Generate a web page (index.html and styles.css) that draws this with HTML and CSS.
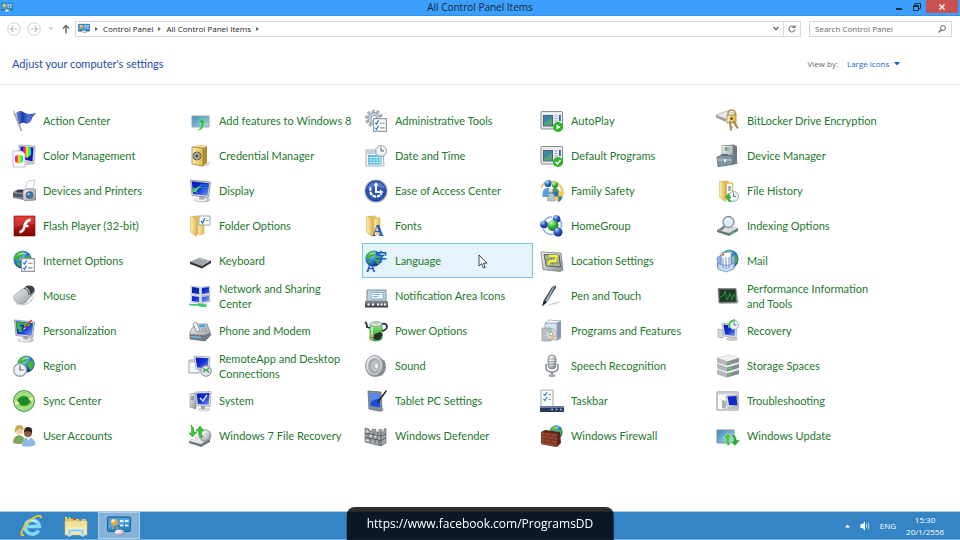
FILE: index.html
```html
<!DOCTYPE html>
<html lang="en">
<head>
    <meta charset="UTF-8">
    <meta name="viewport" content="width=device-width, initial-scale=1.0">
    <title>All Control Panel Items</title>
    <link rel="stylesheet" href="styles.css">
</head>
<body>

    <!-- Shared gradients and icon parts -->
    <svg class="defs" width="0" height="0" aria-hidden="true">
        <defs>
            <linearGradient id="blue" x1="0" y1="0" x2="1" y2="1"><stop offset="0" stop-color="#0a1aa8"/><stop offset=".5" stop-color="#1230d8"/><stop offset="1" stop-color="#7fa6f4"/></linearGradient>
            <linearGradient id="gray" x1="0" y1="0" x2="1" y2="1"><stop offset="0" stop-color="#f6f7f8"/><stop offset="1" stop-color="#8b9096"/></linearGradient>
            <linearGradient id="dark" x1="0" y1="0" x2="0" y2="1"><stop offset="0" stop-color="#8a8f96"/><stop offset="1" stop-color="#33373d"/></linearGradient>
            <linearGradient id="gold" x1="0" y1="0" x2="1" y2="0"><stop offset="0" stop-color="#fbeeb4"/><stop offset="1" stop-color="#dfb94c"/></linearGradient>
            <linearGradient id="green" x1="0" y1="0" x2="0" y2="1"><stop offset="0" stop-color="#8be87a"/><stop offset="1" stop-color="#1f9a2c"/></linearGradient>
            <linearGradient id="red" x1="0" y1="0" x2="0" y2="1"><stop offset="0" stop-color="#e8231c"/><stop offset="1" stop-color="#7c0606"/></linearGradient>
            <linearGradient id="sky" x1="0" y1="0" x2="1" y2="1"><stop offset="0" stop-color="#3f88bd"/><stop offset="1" stop-color="#a5d8ee"/></linearGradient>
            <linearGradient id="rainbow" x1="0" y1="0" x2="1" y2="0"><stop offset="0" stop-color="#f0f"/><stop offset=".25" stop-color="#f33"/><stop offset=".5" stop-color="#fe2"/><stop offset=".75" stop-color="#3e4"/><stop offset="1" stop-color="#0df"/></linearGradient>
            <linearGradient id="flag" x1="0" y1="0" x2="1" y2="0"><stop offset="0" stop-color="#6f8ce0"/><stop offset=".35" stop-color="#1c3a9e"/><stop offset=".6" stop-color="#5478dc"/><stop offset="1" stop-color="#2747b4"/></linearGradient>
            <radialGradient id="ball" cx=".35" cy=".25" r=".8"><stop offset="0" stop-color="#c4dcff"/><stop offset=".4" stop-color="#3567d4"/><stop offset="1" stop-color="#0b1f7a"/></radialGradient>
            <radialGradient id="sea" cx=".35" cy=".25" r=".8"><stop offset="0" stop-color="#b9e6ff"/><stop offset=".45" stop-color="#2f86dc"/><stop offset="1" stop-color="#0a2a86"/></radialGradient>
            <radialGradient id="leaf" cx=".35" cy=".25" r=".8"><stop offset="0" stop-color="#d0ffc0"/><stop offset=".5" stop-color="#35b53a"/><stop offset="1" stop-color="#0e6d1b"/></radialGradient>
            <radialGradient id="silver" cx=".35" cy=".3" r=".8"><stop offset="0" stop-color="#fff"/><stop offset=".6" stop-color="#c3c7cc"/><stop offset="1" stop-color="#777c83"/></radialGradient>
        </defs>

        <symbol id="globe" viewBox="0 0 16 16">
            <circle cx="8" cy="8" r="7.6" fill="url(#sea)"/>
            <path d="M3 3q3-2.500 6-2l-1 2 1.500 1-2 2-2 .5-1 2.500-2.500-1-1.500-1q.5-2.500 2.500-4zM10 6l4-1.500q1.500 3 .8 5.500L12 14l-1.500-3-1.500-1.500zM3 10l3 1 .5 3.500q-3-1-3.500-4.500z" fill="#42b43a"/>
            <path d="M3 5q4-5 9-1.500Q8 3 3 5z" fill="#fff" opacity=".5"/>
        </symbol>
        <symbol id="monitor" viewBox="0 0 24 24">
            <ellipse cx="14" cy="21" rx="8" ry="2.500" fill="#b9bcc1"/>
            <ellipse cx="13" cy="20.500" rx="6" ry="2" fill="#eceef0"/>
            <path d="M11 16h5l.5 4.500h-5z" fill="#a4a8ad"/>
            <path d="M2.500 1l20 2-2 15.500L4 16.500z" fill="#d3d6da" stroke="#7c828a" stroke-width=".7"/>
            <path d="M3.800 2.300l17.400 1.900-1.700 12.600L5 15z" fill="url(#blue)"/>
        </symbol>
        <symbol id="clock" viewBox="0 0 12 12">
            <circle cx="6" cy="6" r="5.500" fill="#eef3f7" stroke="#98a2ab" stroke-width="1"/>
            <path d="M6 2.500V6h3" fill="none" stroke="#55616c" stroke-width="1"/>
            <path d="M6 1.200v1M6 9.800v1M1.200 6h1" stroke="#8c969f" stroke-width=".7"/>
        </symbol>
        <symbol id="list" viewBox="0 0 12 12">
            <path d="M.5.5h11v11H.5z" fill="#fdfdfe" stroke="#969ba1"/>
            <path d="M2 4l1 1.200L4.800 2M2 8.500l1 1.200L4.800 6.500" fill="none" stroke="#2d7fd0" stroke-width="1.100"/>
            <path d="M6 4.500h4M6 8.500h4" stroke="#8b9197"/>
        </symbol>
        <symbol id="folder" viewBox="0 0 18 22">
            <path d="M3 1l7-.5 1 2h3v14L6 21z" fill="#e2bd5d"/>
            <path d="M9 3h6v16l-6 1z" fill="url(#gold)" stroke="#cda94c" stroke-width=".5"/>
            <path d="M1.500 1l6 2.500v18l-6-4z" fill="url(#gold)" stroke="#cda94c" stroke-width=".5"/>
        </symbol>
        <symbol id="panel" viewBox="0 0 24 20">
            <rect x=".5" y="1" width="23" height="14.500" rx="1" fill="#2c83c2" stroke="#1b6299"/>
            <path d="M1.500 2h21v5q-10 1-21 6z" fill="#6db9e8" opacity=".6"/>
            <circle cx="7.500" cy="6.500" r="3.200" fill="#f5a12c"/>
            <path d="M7.500 6.500V3a3.500 3.500 0 0 0-3.500 3.500z" fill="#fff2bf"/>
            <path d="M13 5h3.500M18 5h3.500M13 9.500h3.500M18 9.500h3.500" stroke="#d9f1ff" stroke-width="2.200"/>
            <path d="M5 12h2M9 12h2" stroke="#f5a12c" stroke-width="1.500"/>
            <ellipse cx="12.500" cy="16.500" rx="4.800" ry="3" fill="url(#silver)"/>
        </symbol>
        <symbol id="window" viewBox="0 0 24 24">
            <rect x="1" y="2.500" width="21.500" height="17.500" rx="1" fill="#e9ecef" stroke="#868c93"/>
            <path d="M3 6h10v11.500H3z" fill="#4a5f78"/>
            <path d="M4 7h8v9.500H4z" fill="#3f84a6"/>
            <path d="M4 14l8-5v7.500H4z" fill="#54a078"/>
            <path d="M14.500 7h3M14.500 9.500h3M14.500 12h3" stroke="#9fa6ae"/>
            <path d="M19 6h1.800v6H19z" fill="#2c64ac"/>
        </symbol>
        <symbol id="server" viewBox="0 0 24 12">
            <path d="M1 4l12-3.500 10 3.500v4l-12 3.500-10-3.500z" fill="#858b92"/>
            <path d="M1 4l12-3.500L23 4 11 7.500z" fill="#eceef0"/>
            <path d="M1 4l10 3.500v4L1 8z" fill="#b4b9bf"/>
            <path d="M12.500 9l3-1" stroke="#5bd94a" stroke-width="1.600"/>
        </symbol>
    </svg>

    <header class="titlebar">
        <svg class="titlebar-icon" viewBox="0 0 24 20" aria-hidden="true"><use href="#panel"/></svg>
        <h1 class="titlebar-text">All Control Panel Items</h1>
        <div class="window-buttons">
            <button class="window-button" aria-label="Minimize"><svg width="8" height="8" viewBox="0 0 8 8"><path d="M1 6h6" stroke="#1b2b3a" stroke-width="2"/></svg></button>
            <button class="window-button" aria-label="Restore"><svg width="8" height="8" viewBox="0 0 8 8"><path d="M2 2V.5h5.500v5H6" fill="none" stroke="#1b2b3a"/><path d="M.5 2.500h5v5h-5zM.5 3.500h5" fill="none" stroke="#1b2b3a"/></svg></button>
            <button class="window-button close" aria-label="Close"><svg width="6" height="6" viewBox="0 0 6 6"><path d="M.5.5l5 5M5.500.5l-5 5" stroke="#fff" stroke-width="1.400"/></svg></button>
        </div>
    </header>

    <!-- Navigation bar -->
    <nav class="toolbar">
        <button class="nav-button" aria-label="Back"><svg width="14" height="14" viewBox="0 0 14 14"><circle cx="7" cy="7" r="6.200" fill="none" stroke="#cfcfcf"/><path d="M10.500 7h-7M6.500 4l-3 3 3 3" fill="none" stroke="#c4c4c4" stroke-width="1.200"/></svg></button>
        <button class="nav-button" aria-label="Forward"><svg width="14" height="14" viewBox="0 0 14 14"><circle cx="7" cy="7" r="6.200" fill="none" stroke="#cfcfcf"/><path d="M3.500 7h7M7.500 4l3 3-3 3" fill="none" stroke="#c4c4c4" stroke-width="1.200"/></svg></button>
        <button class="nav-button small" aria-label="Recent locations"><svg width="6" height="4" viewBox="0 0 6 4"><path d="M.5.5h5L3 3z" fill="#ccc"/></svg></button>
        <button class="nav-button up" aria-label="Up"><svg width="8" height="10" viewBox="0 0 8 10"><path d="M4 9.500V1.500M1 4.500l3-3 3 3" fill="none" stroke="#666" stroke-width="1.400"/></svg></button>
        <div class="address">
            <svg class="address-icon" viewBox="0 0 24 20" aria-hidden="true"><use href="#panel"/></svg>
            <span class="crumb-arrow"></span>
            <a class="crumb" href="#">Control Panel</a>
            <span class="crumb-arrow"></span>
            <a class="crumb" href="#">All Control Panel Items</a>
            <span class="crumb-arrow"></span>
            <button class="address-button drop" aria-label="Previous locations"><svg width="6" height="5" viewBox="0 0 6 5"><path d="M.5 1L3 3.800 5.500 1" fill="none" stroke="#666" stroke-width="1.400"/></svg></button>
            <button class="address-button refresh" aria-label="Refresh"><svg width="8" height="8" viewBox="0 0 8 8"><path d="M6.500 2.200A3 3 0 1 0 7 4.500M4.200 2.500H7V0" fill="none" stroke="#777" stroke-width="1.100"/></svg></button>
        </div>
        <div class="search">
            <input class="search-input" type="search" placeholder="Search Control Panel" aria-label="Search Control Panel">
            <svg width="8" height="8" viewBox="0 0 8 8" aria-hidden="true"><circle cx="5" cy="3" r="2.400" fill="none" stroke="#666"/><path d="M3.200 4.800L.6 7.400" stroke="#666" stroke-width="1.400"/></svg>
        </div>
    </nav>

    <div class="heading">
        <h2 class="heading-text">Adjust your computer's settings</h2>
        <div class="view">
            <label for="view">View by:</label>
            <select class="view-select" id="view">
                <option>Large icons</option>
            </select>
            <svg width="6" height="4" viewBox="0 0 6 4" aria-hidden="true"><path d="M0 0h6L3 3.500z" fill="#0d67c8"/></svg>
        </div>
    </div>

    <main class="items">
        <a class="item" href="#">
            <svg class="icon" viewBox="0 0 24 24"><path d="M2 3l7.500 19" stroke="#a0a5ad" stroke-width="1.800"/><circle cx="2" cy="2.800" r="1.200" fill="#cdd1d6"/><path d="M4 4q4-3.500 8-.5 4 2.500 12 .5-4 3.500-5 8-3 4-6.500 2-3-1-5 1.500z" fill="url(#flag)"/></svg>
            Action Center
        </a>
        <a class="item" href="#">
            <svg class="icon" viewBox="0 0 24 24"><path d="M4 7h17v11H4z" fill="url(#sky)" stroke="#9ba5ad"/><path d="M7 22q6-.5 6-8H9.500L14 9l4.500 5h-2.500q0 8-9 8z" fill="#35bd4a" stroke="#eafbe4" stroke-width=".4"/></svg>
            Add features to Windows 8
        </a>
        <a class="item" href="#">
            <svg class="icon" viewBox="0 0 24 24"><circle cx="10" cy="9.500" r="7.500" fill="none" stroke="#a3b0bf" stroke-width="3" stroke-dasharray="3 1.700"/><circle cx="10" cy="9.500" r="6" fill="#c6d0db" stroke="#8b9bad"/><circle cx="10" cy="9.500" r="3" fill="#fff" stroke="#8b9bad"/><use href="#list" x="9" y="9" width="14" height="14"/></svg>
            Administrative Tools
        </a>
        <a class="item" href="#">
            <svg class="icon" viewBox="0 0 24 24"><use href="#window"/><circle cx="18" cy="18" r="5" fill="#2fb42c"/><path d="M16.500 15.500v5l4-2.500z" fill="#fff"/></svg>
            AutoPlay
        </a>
        <a class="item" href="#">
            <svg class="icon" viewBox="0 0 24 24"><path d="M0 6l11-4 10 3-11 5z" fill="#e9ebed" stroke="#989da3" stroke-width=".6"/><path d="M0 6l10 4v3L0 8.500z" fill="#9ca1a7"/><path d="M12 6V4q0-3 3.500-3T19 4v3" fill="none" stroke="#b59b4f" stroke-width="1.600"/><path d="M11 6h9v8h-9z" fill="url(#gold)" stroke="#9b7a20" stroke-width=".7"/><circle cx="15.500" cy="9.500" r="1.500" fill="#6e5514"/><path d="M14 12l1 9.500M17 12l5 7.500" stroke="#a18a48" stroke-width="2"/><path d="M15 18h2M19 17l2-1.500" stroke="#a18a48" stroke-width="1.200"/></svg>
            BitLocker Drive Encryption
        </a>

        <a class="item" href="#">
            <svg class="icon" viewBox="0 0 24 24"><path d="M16 17l5 4h-9z" fill="#c7cace"/><path d="M7 1l16 1-1 18-8-3-7-3z" fill="#d9dce0" stroke="#8d9299" stroke-width=".6"/><path d="M8.500 2.500l13 1-1 14-12-3z" fill="#101cb4"/><path d="M11 4l4-1.500L19 4v7l-4 3-4-3z" fill="url(#rainbow)"/><path d="M1 7h9l3 3v13H1z" fill="#fff" stroke="#a3a7ac" stroke-width=".7"/><path d="M3 12l4-1.500L11 12v5.500L7 20l-4-2.500z" fill="url(#rainbow)"/></svg>
            Color Management
        </a>
        <a class="item" href="#">
            <svg class="icon" viewBox="0 0 24 24"><path d="M16 20l7-3-3 5-8 1z" fill="#dcdcdc"/><path d="M4 3l6-2 9 1v17l-4 3L4 20z" fill="#b48a35"/><path d="M4 3l6-2 9 1-4 2z" fill="#f3dda0"/><path d="M4 3l11 1v18L4 20z" fill="url(#gold)" stroke="#a27a26" stroke-width=".7"/><circle cx="9" cy="12" r="4" fill="#8b8980" stroke="#5f5d57"/><path d="M9 8v8M5 12h8M6.500 9.500l5 5M11.500 9.500l-5 5" stroke="#e6e3d8" stroke-width=".7"/><circle cx="9" cy="12" r="1.600" fill="#555"/></svg>
            Credential Manager
        </a>
        <a class="item" href="#">
            <svg class="icon" viewBox="0 0 24 24"><path d="M2 6h17l1 16H2z" fill="#f5f8fa" stroke="#a6afb8"/><path d="M2.500 6.500h16v3.500h-16z" fill="#c3ced8"/><path d="M4 11h13.500v9.500H4z" fill="#3fb0d8"/><path d="M4 13.500h13.500M4 16h13.500M4 18.500h13.500M7 11v9.500M10 11v9.500M13 11v9.500M16 11v9.500" stroke="#e4f6fc" stroke-width=".7"/><use href="#clock" x="11" y="1" width="12" height="12"/></svg>
            Date and Time
        </a>
        <a class="item" href="#">
            <svg class="icon" viewBox="0 0 24 24"><use href="#window"/><circle cx="18" cy="18" r="5" fill="#2fb42c"/><path d="M15.500 18l2 2 3-4" fill="none" stroke="#fff" stroke-width="1.400"/></svg>
            Default Programs
        </a>
        <a class="item" href="#">
            <svg class="icon" viewBox="0 0 24 24"><path d="M16 21l7-1-3-3z" fill="#c6c8ca"/><path d="M7 1.500l11-1 3 2v17l-5 1-9-2z" fill="#71777e"/><path d="M6 1.500h11v17H6z" fill="url(#gray)" stroke="#83888f" stroke-width=".6"/><path d="M8.500 3h5v4h-5z" fill="#a9afb5"/><circle cx="10" cy="5" r="1.200" fill="#3cbf34"/><path d="M5 12.500q0-2 2-2h3q2 0 2 2" fill="none" stroke="#4f5b66" stroke-width="1.200"/><path d="M1 13l4-1.500h11l1 9-15 2z" fill="#8497a4" stroke="#4c5b66" stroke-width=".7"/><path d="M1 16h15.500" stroke="#bccad3"/><path d="M8 15h2v3H8z" fill="#e7ecef"/></svg>
            Device Manager
        </a>

        <a class="item" href="#">
            <svg class="icon" viewBox="0 0 24 24"><path d="M13 9l3-7 7-1-2 9z" fill="#fff" stroke="#b5bac0" stroke-width=".7"/><path d="M1 13l5-3 12 1v7l-7 3-10-2z" fill="#8f959c"/><path d="M3 13l4-2h8l-2 3z" fill="#353a40"/><path d="M1 14l11 1.500v3.500L1 17.500z" fill="#50565e"/><path d="M11 12l3-2h9.500v11L13 22l-2-2z" fill="url(#gray)" stroke="#757b82" stroke-width=".6"/><circle cx="17.500" cy="16" r="3.800" fill="#56646f"/><circle cx="17.500" cy="16" r="2.600" fill="#2a7fc2"/><circle cx="16.500" cy="15" r="1" fill="#c4e9ff"/></svg>
            Devices and Printers
        </a>
        <a class="item" href="#">
            <svg class="icon" viewBox="0 0 24 24"><use href="#monitor"/><path d="M12 6h7M11 8.500h7.500M13 11h5" stroke="#2b80ee" stroke-width="1"/><path d="M5 13l.5-5 1.500 1.500 7-3.500-5.500 6 1.500 1.500z" fill="#49d85b"/></svg>
            Display
        </a>
        <a class="item" href="#">
            <svg class="icon" viewBox="0 0 24 24"><circle cx="12" cy="12" r="11" fill="#19388f" stroke="#9aa7bd" stroke-width="1.200"/><circle cx="12" cy="12" r="9.500" fill="#2c52b4"/><path d="M3 10q2-7 9-7.500 7 .5 9 7.500-9-4-18 0z" fill="#7f9ee0" opacity=".5"/><path d="M7 8.500a6 6 0 1 0 10.500 6" fill="none" stroke="#fff" stroke-width="2.200" stroke-dasharray="3.500 .8"/><path d="M12 5v8h5" fill="none" stroke="#fff" stroke-width="2"/><path d="M9.500 6.500L12 3.500l2.500 3zM16 10.500l3.500 2.500-3.500 2.500z" fill="#fff"/></svg>
            Ease of Access Center
        </a>
        <a class="item" href="#">
            <svg class="icon" viewBox="0 0 24 24"><path d="M1 9q3-8 14-6 8 3 8 13" fill="none" stroke="#f4c06c" stroke-width="2"/><circle cx="8" cy="4.500" r="3.500" fill="url(#sea)"/><path d="M2.500 18q-1-9 5-9t5.500 9z" fill="#5aa3d8"/><circle cx="15" cy="6" r="3" fill="url(#leaf)"/><path d="M11 16q-.5-7 4-7t4.500 7z" fill="#4d9a48"/><circle cx="11" cy="11.500" r="2.300" fill="url(#silver)"/><path d="M7.500 22q0-8 3.500-8t4 8z" fill="#b6c3cf" stroke="#7f8c99" stroke-width=".5"/><path d="M14 13q3 0 4.500-1.500Q20 13 23 13q0 8-4.500 10Q14 21 14 13z" fill="#2d6fc8"/><path d="M18.500 11.500Q20 13 23 13v4.500h-4.500zM14.300 17.500h4.200V23q-3.700-1.500-4.200-5.500z" fill="#f6cf3a"/></svg>
            Family Safety
        </a>
        <a class="item" href="#">
            <svg class="icon" viewBox="0 0 24 24"><use href="#folder" x="2" y="1" width="18" height="22"/><path d="M11 5h5v12h-5z" fill="#fbfbf4"/><path d="M12 7h3v5h-3z" fill="#8fb6d8"/><use href="#clock" x="12" y="12" width="11" height="11"/><path d="M15 23q-4 0-4-4H8.500l4-5 3 5h-2q0 2.500 2 3z" fill="#31b23c"/></svg>
            File History
        </a>

        <a class="item" href="#">
            <svg class="icon" viewBox="0 0 24 24"><path d="M2 2h21v20H2z" fill="url(#red)" stroke="#6b0707" stroke-width=".6"/><path d="M2.500 2.500h20v8q-10-1-20 4z" fill="#fff" opacity=".12"/><path d="M18.500 6q-4.500 0-6 6.500-1.500 5.500-5 5.500" fill="none" stroke="#fff" stroke-width="2.800"/><path d="M12 12h4.500" stroke="#fff" stroke-width="2.400"/></svg>
            Flash Player (32-bit)
        </a>
        <a class="item" href="#">
            <svg class="icon" viewBox="0 0 24 24"><use href="#folder" x="1" y="1" width="18" height="22"/><path d="M11 2h11v9H11z" fill="#fff" stroke="#9aa0a7"/><path d="M13 7l1.500 2L17 4" fill="none" stroke="#2d7fd0" stroke-width="1.500"/><path d="M18 6.500h3" stroke="#9aa0a7"/></svg>
            Folder Options
        </a>
        <a class="item" href="#">
            <svg class="icon" viewBox="0 0 24 24"><use href="#folder" x="1" y="1" width="18" height="22"/><text x="8" y="22" font-family="Liberation Serif, serif" font-weight="bold" font-size="16" fill="#2459c4">A</text></svg>
            Fonts
        </a>
        <a class="item" href="#">
            <svg class="icon" viewBox="0 0 24 24"><path d="M14 2a9 9 0 0 1 7 12M3 15a9 9 0 0 0 11 5M4 8q2-5 8-5" fill="none" stroke="#8ca9df" stroke-width="1.500"/><circle cx="16.500" cy="5" r="3.800" fill="url(#ball)"/><circle cx="4" cy="10.500" r="3.800" fill="url(#ball)"/><circle cx="13" cy="11.500" r="5.500" fill="url(#leaf)"/><circle cx="18" cy="18" r="4.500" fill="url(#ball)"/></svg>
            HomeGroup
        </a>
        <a class="item" href="#">
            <svg class="icon" viewBox="0 0 24 24"><path d="M1 16l7-4 14 2v3l-9 5-12-4z" fill="#6e747b"/><path d="M1 16l7-4 14 2-9 5z" fill="#dadde1"/><path d="M14 20l4-2" stroke="#49c746" stroke-width="1.500"/><path d="M9 12L3 17" stroke="#7c838b" stroke-width="2.400"/><circle cx="12.500" cy="8" r="5.500" fill="#d9ebfa" stroke="#848c94" stroke-width="1.300"/><path d="M9 7q2-4 6-2-3 0-6 2z" fill="#fff"/></svg>
            Indexing Options
        </a>

        <a class="item" href="#">
            <svg class="icon" viewBox="0 0 24 24"><use href="#globe" x="1" y="1" width="19" height="19"/><use href="#list" x="9" y="9" width="14" height="14"/></svg>
            Internet Options
        </a>
        <a class="item" href="#">
            <svg class="icon" viewBox="0 0 24 24"><path d="M2 12.500l9-4 12 3-9 6z" fill="#c2c5c9"/><path d="M2 12.500l12 4.500v2.500L2 15zM14 17l9-5.500v2.500l-9 5.500z" fill="#34383e"/><path d="M4 12.500l11 3.500M6.500 11.500l11 3M9 10.500l10 2.600M5 13.500l8-4.500M8.500 14.500l8-4.500M12 15.500l7.500-4.500" stroke="#7b8087" stroke-width=".6"/></svg>
            Keyboard
        </a>
        <a class="item selected" href="#">
            <svg class="icon" viewBox="0 0 24 24"><use href="#globe" x="1" y="1" width="17" height="17"/><text x="11" y="13" font-family="Noto Sans CJK JP, sans-serif" font-weight="bold" font-size="12" fill="#1c5bc0">字</text><text x="2" y="23" font-family="Liberation Sans, sans-serif" font-weight="bold" font-size="13" fill="#1c5bc0">A</text></svg>
            Language
            <svg class="cursor" width="10" height="15" viewBox="0 0 10 15" aria-hidden="true"><path d="M1 1v11l2.600-2.400L5.400 14l1.800-.8-1.800-4.100H9z" fill="#fff" stroke="#333" stroke-width=".9"/></svg>
        </a>
        <a class="item" href="#">
            <svg class="icon" viewBox="0 0 24 24"><path d="M1 3l20 1 2 17-3 1.500-17-2z" fill="url(#gray)" stroke="#777d84" stroke-width=".8"/><path d="M4 5.500l15 .8 1.500 11.700-14-1z" fill="#a9b98a" stroke="#555b52"/><path d="M5 11l14-3M10 6l4 12M6 15l13-1" stroke="#7c8c67" stroke-width=".9"/><path d="M18 7h-9M17 7l-2 5h-5l-2 4" fill="none" stroke="#fff12b" stroke-width="1.800"/></svg>
            Location Settings
        </a>
        <a class="item" href="#">
            <svg class="icon" viewBox="0 0 24 24"><use href="#globe" x="3" y="0" width="20" height="20"/><path d="M5 4l10-1v14H5z" fill="#fff" stroke="#7f97b5" stroke-width=".7"/><path d="M6 4.500h2v2H6z" fill="#e43c2d"/><path d="M1 9l4-3v12l-3 2zM15 8l4-2v12l-3 3z" fill="#8eb7e4" stroke="#587da9" stroke-width=".7"/><path d="M2 14l3 2h9l4-2v6l-8 3-8-3z" fill="#c6ddf5" stroke="#6488b4" stroke-width=".7"/><path d="M7 9v10M10 8v12M13 8v11" stroke="#6f95c4"/></svg>
            Mail
        </a>

        <a class="item" href="#">
            <svg class="icon" viewBox="0 0 24 24"><path d="M3 18q6 4 14 0l6-8-3 7-6 4H5z" fill="#c9cbce"/><path d="M2 15q-1-3 2-5l8-6q3-3 8-1 4 2 2 6l-8 9q-3 3-8 1-3-1.500-4-4z" fill="url(#gray)" stroke="#7d8288" stroke-width=".6"/><path d="M13 2.500q4-2 8 0 3 3 0 6l-3 3q1-6-5-9z" fill="#3b3f46"/><path d="M12 4q5 2 5 7" fill="none" stroke="#454a51"/></svg>
            Mouse
        </a>
        <a class="item" href="#">
            <svg class="icon" viewBox="0 0 24 24"><path d="M3 2l9 1v8l-9-1zM13 3l9-1v9l-9 1zM3 11l9 1v8l-9-2zM13 12l9-1v7l-9 2z" fill="#d5d9df" stroke="#adb2b9" stroke-width=".5"/><path d="M4 3l7 1v6l-7-1zM14 4l7-1v6l-7 1zM4 12l7 1v5l-7-1zM14 13l7-1v5l-7 1z" fill="url(#blue)"/><path d="M1 19.500q6 1 10 0l8 1-1 2.500q-6 0-9-1.500-4 .5-8-.5z" fill="#3dce67"/></svg>
            Network and Sharing Center
        </a>
        <a class="item" href="#">
            <svg class="icon" viewBox="0 0 24 24"><path d="M3 6h19v11H3z" fill="#c3d1de" stroke="#7f8d9b"/><path d="M7 8.500h12V15H7z" fill="#f4f9fc" stroke="#83aed0"/><path d="M8.500 10.500h8M8.500 12.500h6" stroke="#81b3db"/><path d="M1 17h23v6.500H1z" fill="url(#dark)"/><path d="M3.500 19.500h2v2h-2zM8 19.500h2v2H8zM13 19.500h2v2h-2zM16.500 19.500h2v2h-2zM20 19.500h2v2h-2z" fill="#fff"/></svg>
            Notification Area Icons
        </a>
        <a class="item" href="#">
            <svg class="icon" viewBox="0 0 24 24"><path d="M5 22q8-4 17-5l-6 3z" fill="#d0d1d3"/><path d="M12 3l3-1.500q1.500 0 1 2L7 18l-4.500 4L4 16z" fill="#3c4651"/><path d="M13 3l2-1-8.500 17-2-1z" fill="#93b2c9"/><path d="M4 16l3 2-5 4.500z" fill="#22272d"/></svg>
            Pen and Touch
        </a>
        <a class="item" href="#">
            <svg class="icon" viewBox="0 0 24 24"><path d="M20 6l3 12-2 2H4z" fill="#caccce"/><path d="M2 4.500h18l1 14-18 .5z" fill="#4a5052" stroke="#838a8c" stroke-width=".8"/><path d="M3.500 6h15.500l.5 11.300-15.300.2z" fill="#1d3a24"/><path d="M4 13l3-1 2-5 2 9 2-4 1-3 2 7 1.500-6 1 3" fill="none" stroke="#2f9a3e" stroke-width=".9"/></svg>
            Performance Information and Tools
        </a>

        <a class="item" href="#">
            <svg class="icon" viewBox="0 0 24 24"><use href="#monitor"/><path d="M4 3l15 1.500q-2 4-6 3-6 3-2 5l-5 1q2-3-1-4z" fill="#2fbd48"/><path d="M8 7q4-2 3 1t3 2" fill="none" stroke="#1424b8" stroke-width="1.500"/><path d="M19.500 1L12 10" stroke="#d2402d" stroke-width="1.500"/><path d="M10.500 11.500l2-3 1 1z" fill="#fbe38c"/></svg>
            Personalization
        </a>
        <a class="item" href="#">
            <svg class="icon" viewBox="0 0 24 24"><path d="M2 13l5-8 12 0 4 11-6 6-15-2z" fill="url(#gray)" stroke="#6d737a" stroke-width=".7"/><path d="M2 15l14 1 6-2v3l-5 5-15-2z" fill="#737a82"/><path d="M5 5q2-3 4-1l3 8q-2 2-4 0z" fill="#eceef0" stroke="#757b82" stroke-width=".7"/><path d="M11 6l6-.5.5 2.500-6 .5z" fill="#4da3dd"/><path d="M13 10h6M13.500 12h6" stroke="#6f7f8c" stroke-dasharray="1 .8"/><path d="M3 17l10 .8v1.500L3 18.500z" fill="#67c1ef"/></svg>
            Phone and Modem
        </a>
        <a class="item" href="#">
            <svg class="icon" viewBox="0 0 24 24"><path d="M1 3q2 1 2 5l3 1M16 6q6-3 7 1 0 4-5 5" fill="none" stroke="#2d3138" stroke-width="1.800"/><path d="M6 5h12v15q-6 4-12 0z" fill="url(#green)" stroke="#338a38" stroke-width=".6"/><ellipse cx="12" cy="5" rx="6" ry="2.500" fill="#d8e0d6" stroke="#84907f" stroke-width=".6"/><path d="M10 2h4v2.500h-4z" fill="#b7bfb5"/><path d="M8 8v10" stroke="#d9ffd0" stroke-width="1.500"/><path d="M9 16l7-3 3 3-4 5-6-1z" fill="#2b2b2d"/><path d="M10 17l-4-1M10 19.500l-5 1" stroke="#cba756" stroke-width="1.400"/></svg>
            Power Options
        </a>
        <a class="item" href="#">
            <svg class="icon" viewBox="0 0 24 24"><path d="M5 3l13-2 3 2v17l-5 2z" fill="#aeb6cf"/><path d="M5 4h12v17H5z" fill="#dce2f2" stroke="#8791b3" stroke-width=".6"/><path d="M5 4l4-3 12 1-4 2z" fill="#fff" stroke="#8791b3" stroke-width=".6"/><path d="M17 4l4-2v16l-4 3z" fill="#8794b8"/><path d="M2 9h9v13H2z" fill="#b9c3c9" stroke="#7f878e" stroke-width=".6"/><circle cx="11" cy="15" r="5.500" fill="#d3d6d2" stroke="#9aa09a" stroke-width=".6"/><path d="M11 15l-4-4a6 6 0 0 1 5-1.500z" fill="#8bd08a"/><path d="M11 15l5 2.500a6 6 0 0 1-4 3z" fill="#e8c076"/><circle cx="11" cy="15" r="1.600" fill="#fff" stroke="#888" stroke-width=".6"/></svg>
            Programs and Features
        </a>
        <a class="item" href="#">
            <svg class="icon" viewBox="0 0 24 24"><path d="M2 10l5 1v8l-5-1z" fill="#d6d9dc" stroke="#8f949a" stroke-width=".6"/><ellipse cx="16" cy="20" rx="6" ry="2" fill="#c8cbce"/><path d="M6 4l15 2-1 13-12-2z" fill="#dfe1e4" stroke="#8f949a" stroke-width=".6"/><path d="M7.500 5.500l12 1.500-1 10-9.500-1.500z" fill="url(#blue)"/><use href="#clock" x="13" y="1" width="10" height="10"/><path d="M13 9q-1-7 6-8" fill="none" stroke="#47c250" stroke-width="1.800"/></svg>
            Recovery
        </a>

        <a class="item" href="#">
            <svg class="icon" viewBox="0 0 24 24"><use href="#globe" x="5" y="1" width="18" height="18"/><use href="#clock" x="1" y="9" width="14" height="14"/></svg>
            Region
        </a>
        <a class="item" href="#">
            <svg class="icon" viewBox="0 0 24 24"><path d="M1 6h10v13H1z" fill="#f6f7f9" stroke="#9ba1aa"/><path d="M1.500 6.500h9v2h-9z" fill="#bec7d3"/><path d="M6 2l16 1-1 13-13-1z" fill="#dfe1e4" stroke="#8f949a" stroke-width=".6"/><path d="M7.500 3.500l13 .8-.8 10.200-10.500-1z" fill="url(#blue)"/><circle cx="18" cy="17" r="5.300" fill="#dfe2e5" stroke="#8a9096"/><path d="M15 18l2.500-2-2.500-1.500M21 14l-2.500 2 2.500 2.500" fill="none" stroke="#35a344" stroke-width="1.300"/></svg>
            RemoteApp and Desktop Connections
        </a>
        <a class="item" href="#">
            <svg class="icon" viewBox="0 0 24 24"><path d="M14 3q8 2 8 10 0 5-5 9l-5 .5z" fill="#878c92"/><ellipse cx="10.500" cy="12" rx="9" ry="10.500" fill="url(#silver)" stroke="#858a90" stroke-width=".8"/><ellipse cx="10.500" cy="12" rx="6.800" ry="8.300" fill="#a2a7ad" stroke="#e8eaec" stroke-width=".8"/><ellipse cx="11.500" cy="12" rx="4.500" ry="5.800" fill="#bfc4c9"/><ellipse cx="12.500" cy="12" rx="2.300" ry="3" fill="#eef0f2" stroke="#858a90" stroke-width=".6"/></svg>
            Sound
        </a>
        <a class="item" href="#">
            <svg class="icon" viewBox="0 0 24 24"><path d="M6 10v3q0 5 6 5t6-5v-3" fill="none" stroke="#8a8f99" stroke-width="1.600"/><rect x="8" y="1" width="8" height="14" rx="4" fill="url(#silver)" stroke="#7b808a" stroke-width=".8"/><path d="M8.500 5h7M8.500 7.500h7M8.500 10h7" stroke="#8b909b" stroke-width=".8"/><path d="M11 18h2v3.500h-2z" fill="#80858e"/><ellipse cx="12" cy="21.500" rx="3.500" ry="1.500" fill="#a4a9b1"/></svg>
            Speech Recognition
        </a>
        <a class="item" href="#">
            <svg class="icon" viewBox="0 0 24 24"><use href="#server" x="0" y="12" width="24" height="12"/><use href="#server" x="0" y="6" width="24" height="12"/><use href="#server" x="0" y="0" width="24" height="12"/></svg>
            Storage Spaces
        </a>

        <a class="item" href="#">
            <svg class="icon" viewBox="0 0 24 24"><circle cx="12" cy="12" r="10.500" fill="#5cb857" stroke="#4f9850"/><circle cx="12" cy="12" r="9.300" fill="none" stroke="#c9f0b9" stroke-width="1"/><ellipse cx="12" cy="12" rx="6" ry="4.500" fill="#1f8a29"/><path d="M3.500 12q0-8 8.500-8.500 5 0 7.500 4l-2 1.500q-3-3-6.500-2.500-4 .5-7.500 5.500z" fill="#a9e07c"/><path d="M20.500 12q0 8-8.500 8.500-5 0-7.500-4l2-1.500q3 3 6.500 2.500 4-.5 7.500-5.500z" fill="#a9e07c"/><path d="M16 9.500l5-2-.5 6zM8 14.500l-5 2 .5-6z" fill="#f2e79a"/></svg>
            Sync Center
        </a>
        <a class="item" href="#">
            <svg class="icon" viewBox="0 0 24 24"><path d="M2 5l6-1v16l-6-2z" fill="url(#gray)" stroke="#858a90" stroke-width=".6"/><path d="M3 8h3M3 10h3" stroke="#5f666d"/><ellipse cx="16" cy="20.500" rx="6.500" ry="2" fill="#d8dadd"/><path d="M13 16h4v4h-4z" fill="#a4a8ad"/><path d="M7 3l16-.5-1 15-13-1z" fill="#dfe1e4" stroke="#8f949a" stroke-width=".6"/><path d="M8.500 4.500l13-.4-.8 12-10.700-1z" fill="url(#blue)"/><path d="M12 9l3 3 4-6" fill="none" stroke="#e3edff" stroke-width="1.400"/></svg>
            System
        </a>
        <a class="item" href="#">
            <svg class="icon" viewBox="0 0 24 24"><path d="M17 19l4 1-5 3-8-1z" fill="#caccce"/><path d="M4 2l13 1 1 19-13-2z" fill="#8a929c" stroke="#555c65" stroke-width=".7"/><path d="M5.500 4l10 .8.8 13.700-9.800-1.500z" fill="#1c4fd8"/><path d="M5.500 4l10 .8.3 5q-6 0-9.500 4z" fill="#6ea6f2" opacity=".7"/><path d="M23 2l-8 11-2 2 .5-3L22 1z" fill="#22262b"/></svg>
            Tablet PC Settings
        </a>
        <a class="item" href="#">
            <svg class="icon" viewBox="0 0 24 24"><path d="M1 1h12v17H1z" fill="#fafbfc" stroke="#a2a7ad"/><path d="M3.500 5L5 6.500 7 3M3.500 10L5 11.500 7 8" fill="none" stroke="#2d8fd6" stroke-width="1.300"/><path d="M8.500 5.500h2.500M8.500 10.500h2.500" stroke="#8f959b"/><path d="M0 17h24v6H0z" fill="#263a5c"/><path d="M0 17h24v2H0z" fill="#697f9f"/><path d="M11 20.500h2M15.500 20.500h2M20 20.500h2" stroke="#9bb3d1" stroke-width="1.500"/></svg>
            Taskbar
        </a>
        <a class="item" href="#">
            <svg class="icon" viewBox="0 0 24 24"><path d="M1 3h21v18H1z" fill="#fbfcfd" stroke="#8a9097"/><path d="M1.500 3.500h20v2h-20z" fill="#cbd2da"/><path d="M6 11l4 1v8l-4-1z" fill="#a9aeb5"/><path d="M10 7l11-1 1 12-11-1z" fill="#dfe1e4" stroke="#8f949a" stroke-width=".6"/><path d="M11.500 7.500l9-.5.800 9.500L13 16z" fill="#1428c4"/><path d="M11 19h10" stroke="#a7abb0" stroke-width="1.500"/></svg>
            Troubleshooting
        </a>

        <a class="item" href="#">
            <svg class="icon" viewBox="0 0 24 24"><path d="M1 19q0-7 6-8 6 1 6 8-6 2-12 0z" fill="#7fa55b"/><circle cx="7.500" cy="6.500" r="4" fill="#efcf9f"/><path d="M3 9q-1-8 4.500-8Q12 1.500 11.500 6 8 3.500 5 6z" fill="#c3a94f"/><path d="M10 22q0-8 6-9 7 1 7.500 8-6 3-13.500 1z" fill="#8cb7e0"/><circle cx="16" cy="9" r="4" fill="#8b5c3a"/><path d="M12 8q0-5 4.500-5T20 9q-3-3-8-1z" fill="#2e2520"/><path d="M14 13l2.500 4 2-4z" fill="#e9f2fb"/></svg>
            User Accounts
        </a>
        <a class="item" href="#">
            <svg class="icon" viewBox="0 0 24 24"><path d="M1 17l9-5 12 3v3l-9 5-12-4z" fill="#6f757b"/><path d="M1 17l9-5 12 3-9 5z" fill="#e4e6e9"/><circle cx="17" cy="11.500" r="6" fill="url(#silver)" stroke="#878c92" stroke-width=".6"/><circle cx="17" cy="11.500" r="1.500" fill="#fff" stroke="#8d9298" stroke-width=".6"/><path d="M3 1q3 2 3 7h3l-4.500 5L1 9h2.500q0-5-.5-8z" fill="#3fc535" stroke="#1b8b22" stroke-width=".5"/><path d="M13 14q-3-3-2.500-7H8l4-5 4 5h-2.500q-.5 4 1.500 6z" fill="#3fc535" stroke="#1b8b22" stroke-width=".5"/></svg>
            Windows 7 File Recovery
        </a>
        <a class="item" href="#">
            <svg class="icon" viewBox="0 0 24 24"><path d="M1 4l4 1v2l3 .5V5l4 .5v2.500l3 .3V5.500l3 .3V8l2 .2V5l2-.5V19l-5 3L1 18z" fill="#a3a8ab" stroke="#565b60" stroke-width=".6"/><path d="M1 9l16 3 5-2M1 13.500l16 3 5-2.500M5 6v4M10 7.500v3M14 8.500v3M4 10v4M9 11v4M13 12v4M6 14.500v4M11 15.500v4M15 16v5M17 8v14" fill="none" stroke="#4b5055" stroke-width=".8"/><path d="M2 7.500l3 .5M6 11.500l2 .4M2 16l3 .7M10.500 12.500l2 .3" stroke="#e1e4e6" stroke-width="1.500"/></svg>
            Windows Defender
        </a>
        <a class="item" href="#">
            <svg class="icon" viewBox="0 0 24 24"><use href="#globe" x="9" y="1" width="14" height="14"/><path d="M1 8l4-2 15 2 1 11-4 4-16-3z" fill="#5e2519"/><path d="M1 8l16 2v13L1 20z" fill="#964732"/><path d="M1 11l16 2M1 14l16 2.500M1 17l16 3M5 8.500v3M11 9.500v3M8 12v3M14 13v3M5 14.500v3M11 15.500v3M8 18v3M14 19v3" stroke="#6a2a1c" stroke-width=".7"/></svg>
            Windows Firewall
        </a>
        <a class="item" href="#">
            <svg class="icon" viewBox="0 0 24 24"><path d="M1 6h17v13H1z" fill="url(#sky)" stroke="#7f8c97"/><path d="M12 22q-3-3-2.500-8H7l5-5 4 5h-2.500q-.5 4 1 6z" fill="#45c83c" stroke="#e9fbe4" stroke-width=".5"/><path d="M17 10q4 2 3.500 6H24l-5 6-4-5h2.500q.5-4-2.500-6z" fill="#29a82e" stroke="#e9fbe4" stroke-width=".5"/></svg>
            Windows Update
        </a>
    </main>

    <!-- Taskbar -->
    <footer class="taskbar">
        <button class="task" aria-label="Internet Explorer">
            <svg width="24" height="24" viewBox="0 0 24 24"><path d="M18.500 16.500a7 7 0 1 1 .8-4H7.500" fill="none" stroke="#7fdcf8" stroke-width="3.600"/><path d="M16.500 8a7 7 0 0 0-10 1" fill="none" stroke="#d4f6ff" stroke-width="1.200"/><path d="M4 21q-4 1-2-4Q6 8 14 3.500q7-4 7 .5" fill="none" stroke="#f6c32f" stroke-width="1.900"/></svg>
        </button>
        <button class="task" aria-label="File Explorer">
            <svg width="24" height="24" viewBox="0 0 24 24"><path d="M1 3h5l1 2h15v16H1z" fill="#e5c669"/><path d="M3 3h2v2H3z" fill="#4ab54f"/><path d="M9 4h3v2H9z" fill="#d9553e"/><path d="M15 5h3v2h-3z" fill="#3f9fda"/><path d="M1 7h22v14H1z" fill="#f8e9a9" stroke="#d8b85c" stroke-width=".6"/><path d="M1.500 11h21M1.500 9h21" stroke="#ead280" stroke-width=".8"/><path d="M4 22v-5q0-2 2-2h12q2 0 2 2v5h-3v-4H7v4z" fill="#8fd0ea" stroke="#d8f2fb" stroke-width=".8"/></svg>
        </button>
        <button class="task active" aria-label="Control Panel">
            <svg width="24" height="20" viewBox="0 0 24 20"><use href="#panel"/></svg>
        </button>
        <div class="tray">
            <svg width="5" height="4" viewBox="0 0 5 4" aria-hidden="true"><path d="M0 3.500h5L2.500.5z" fill="#fff"/></svg>
            <svg width="10" height="10" viewBox="0 0 10 10" aria-hidden="true"><path d="M.5 3h2L5 .5v9L2.500 7h-2z" fill="#fff"/><path d="M6.300 3q1 2 0 4M8 1.800q2 3.200 0 6.400" fill="none" stroke="#dcecf8" stroke-width=".8"/></svg>
            <span>ENG</span>
            <div class="clock">
                <time>15:30</time>
                <time>20/1/2556</time>
            </div>
        </div>
    </footer>

    <div class="caption">https://www.facebook.com/ProgramsDD</div>

</body>
</html>
```

FILE: styles.css
```css
* {
    box-sizing: border-box;
}
body {
    font-family: "Open Sans", "Noto Sans", sans-serif;
    background-color: #fff;
    margin: 0;
    min-height: 100vh;
    display: flex;
    flex-direction: column;
}
button {
    background: none;
    border: none;
    padding: 0;
    display: flex;
    align-items: center;
    justify-content: center;
}
a {
    text-decoration: none;
}
.defs {
    position: absolute;
}

/* Title bar */
.titlebar {
    height: 16px;
    display: grid;
    grid-template-columns: 1fr auto 1fr;
    align-items: center;
    background-color: #3b9ffb;
    border-bottom: 1px solid #3390e6;
}
.titlebar-icon {
    width: 12px;
    height: 11px;
    margin-left: 1px;
}
.titlebar-text {
    margin: 0;
    font-size: 10px;
    font-weight: normal;
    line-height: 15px;
    color: #12273b;
}
.window-buttons {
    display: flex;
    justify-content: flex-end;
    align-self: start;
    padding-right: 2px;
}
.window-button {
    width: 18px;
    height: 13px;
}
.window-button.close {
    width: 32px;
    background-color: #c75050;
}

/* Navigation bar */
.toolbar {
    display: flex;
    align-items: center;
    height: 25px;
    padding: 0 8px 0 7px;
    font-size: 8px;
}
.nav-button {
    width: 14px;
    margin-right: 6px;
}
.nav-button.small {
    width: 8px;
}
.nav-button.up {
    width: 10px;
    margin-right: 4px;
}
.address {
    flex: 1;
    display: flex;
    align-items: center;
    height: 16px;
    padding-left: 2px;
    border: 1px solid #d9d9d9;
}
.address-icon {
    width: 12px;
    height: 11px;
}
.crumb-arrow {
    margin: 0 5px;
    border: 2px solid transparent;
    border-left: 3px solid #666;
    border-right: none;
}
.crumb {
    color: #222;
}
.address-button {
    width: 17px;
    height: 14px;
}
.drop {
    width: 14px;
    margin-left: auto;
}
.refresh {
    border-left: 1px solid #d9d9d9;
}
.search {
    display: flex;
    align-items: center;
    width: 143px;
    height: 16px;
    margin-left: 8px;
    padding: 0 5px;
    border: 1px solid #d9d9d9;
}
.search-input {
    flex: 1;
    min-width: 0;
    padding: 0;
    border: none;
    background: none;
    font-family: inherit;
    font-size: 8px;
}
.search-input::placeholder {
    color: #666;
}

/* Heading */
.heading {
    display: flex;
    align-items: center;
    justify-content: space-between;
    height: 44px;
    padding: 2px 60px 0 12px;
    border-bottom: 1px solid #dce9f5;
}
.heading-text {
    margin: 0;
    font-family: Lato, sans-serif;
    font-size: 11px;
    font-weight: normal;
    color: #1e4aa8;
}
.view {
    display: flex;
    align-items: center;
    font-size: 8px;
    color: #666;
}
.view-select {
    appearance: none;
    margin: 0 4px 0 9px;
    padding: 0;
    border: none;
    background: none;
    font-family: inherit;
    font-size: 8px;
    color: #0d67c8;
}

/* Items */
.items {
    flex: 1;
    display: grid;
    grid-template-columns: repeat(auto-fill, 171px);
    grid-auto-rows: 35px;
    column-gap: 5px;
    align-content: start;
    padding: 18px 10px;
}
.item {
    position: relative;
    display: flex;
    align-items: center;
    gap: 7px;
    padding: 0 1px;
    border: 1px solid transparent;
    font-family: Lato, sans-serif;
    font-size: 11px;
    line-height: 15px;
    color: #1c7a2b;
}
.item.selected {
    background-color: #e5f3fb;
    border-color: #7ac5ea;
}
.icon {
    width: 24px;
    height: 24px;
    flex-shrink: 0;
    overflow: visible;
}
.cursor {
    position: absolute;
    left: 115px;
    top: 10px;
}

/* Taskbar */
.taskbar {
    display: flex;
    height: 29px;
    padding-left: 10px;
    background-color: #3585c6;
    border-top: 1px solid #a9cbe6;
    border-bottom: 1px solid #79b3e2;
}
.task {
    width: 44px;
}
.task.active {
    width: 42px;
    background-color: #86b1d8;
    border: 1px solid #b3d0ea;
}
.tray {
    display: flex;
    align-items: center;
    gap: 10px;
    margin-left: auto;
    padding-right: 16px;
    font-size: 8px;
    color: #fff;
}
.clock {
    display: flex;
    flex-direction: column;
    align-items: center;
    line-height: 12px;
}

/* Link over the bottom edge */
.caption {
    position: fixed;
    left: 50%;
    bottom: 0;
    transform: translateX(-50%);
    padding: 0 20px;
    border-radius: 8px 8px 0 0;
    background-color: rgba(0, 0, 0, 0.82);
    font-size: 12px;
    line-height: 33px;
    color: #fff;
}
```
